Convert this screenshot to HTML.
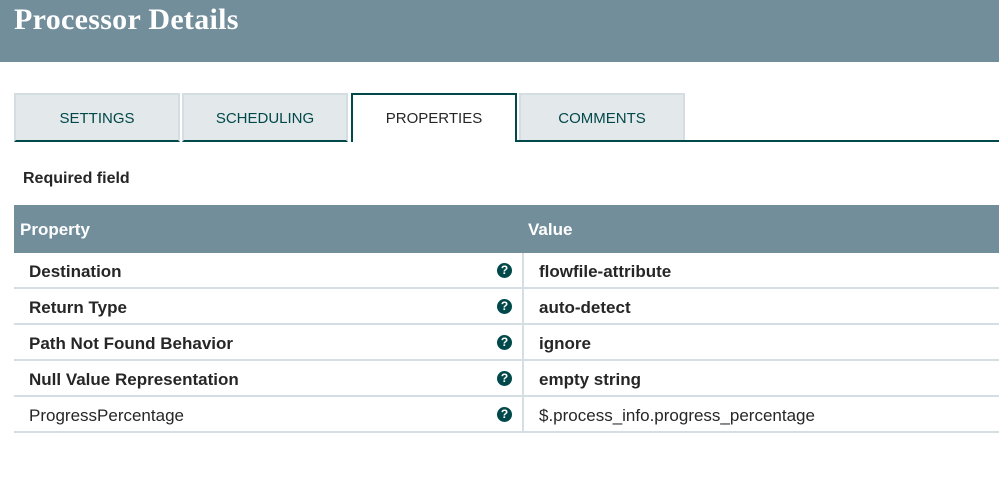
<!DOCTYPE html>
<html><head><style>
*{margin:0;padding:0;box-sizing:border-box}
body{width:999px;height:484px;background:#fff;font-family:"Liberation Sans",sans-serif;position:relative;overflow:hidden;color:#262626}
.hd{position:absolute;left:0;top:0;width:999px;height:62px;background:#728e9b}
.hd h1{position:absolute;left:14px;top:3px;color:#fff;font-size:30px;font-weight:bold;font-family:"Liberation Serif",serif;letter-spacing:0.3px}
.tab{position:absolute;top:93px;height:49px;background:#e3e8eb;border:2px solid #d3dde2;border-bottom:2px solid #004849;color:#004849;font-size:15px;text-align:center;line-height:48px}
.tab.a{background:#fff;border:2px solid #004849;border-bottom:none;color:#262626;height:49px}
.line{position:absolute;left:515px;top:140px;width:484px;height:2px;background:#004849}
.req{position:absolute;left:23px;top:170px;font-size:16px;font-weight:bold}
.th{position:absolute;left:14px;top:205px;width:985px;height:48px;background:#728e9b;color:#fff;font-weight:bold;font-size:17px}
.th span{position:absolute;top:15px}
.row{position:absolute;left:14px;width:985px;height:36px;border-bottom:2px solid #d5dee3;font-size:17px}
.row .k{position:absolute;left:15px;top:9px}
.row .v{position:absolute;left:525px;top:9px}
.row .sep{position:absolute;left:508px;top:0;width:2px;height:36px;background:#d5dee3}
.row .q{position:absolute;left:483px;top:10px;width:15px;height:15px;border-radius:50%;background:#004849;color:#fff;font-size:12px;font-weight:bold;text-align:center;line-height:15px}
b{font-weight:bold}
</style></head><body>
<div class="hd"><h1>Processor Details</h1></div>
<div class="tab" style="left:14px;width:166px">SETTINGS</div>
<div class="tab" style="left:182px;width:166px">SCHEDULING</div>
<div class="tab a" style="left:351px;width:166px">PROPERTIES</div>
<div class="tab" style="left:519px;width:166px">COMMENTS</div>
<div class="line"></div>
<div class="req">Required field</div>
<div class="th"><span style="left:6px">Property</span><span style="left:514px">Value</span></div>
<div class="row" style="top:253px"><b class="k">Destination</b><div class="q">?</div><div class="sep"></div><b class="v">flowfile-attribute</b></div>
<div class="row" style="top:289px"><b class="k">Return Type</b><div class="q">?</div><div class="sep"></div><b class="v">auto-detect</b></div>
<div class="row" style="top:325px"><b class="k">Path Not Found Behavior</b><div class="q">?</div><div class="sep"></div><b class="v">ignore</b></div>
<div class="row" style="top:361px"><b class="k">Null Value Representation</b><div class="q">?</div><div class="sep"></div><b class="v">empty string</b></div>
<div class="row" style="top:397px"><span class="k">ProgressPercentage</span><div class="q">?</div><div class="sep"></div><span class="v">$.process_info.progress_percentage</span></div>
</body></html>
